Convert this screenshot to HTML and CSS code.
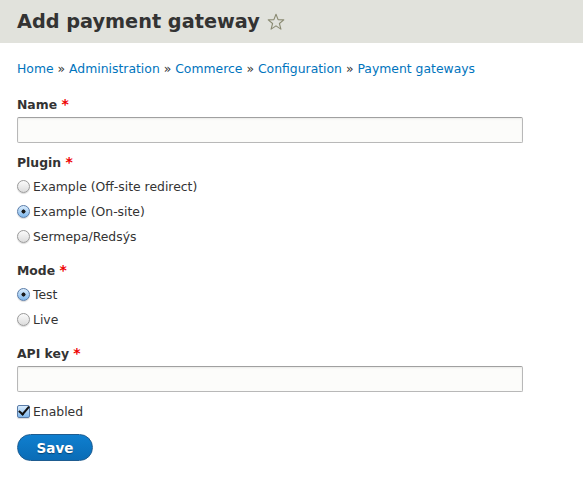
FILE: index.html
```html
<!DOCTYPE html>
<html>
<head>
<meta charset="utf-8">
<link rel="stylesheet" href="styles.css">
</head>
<body>
<header class="page-header">
  <h1 class="page-title">Add payment gateway <span class="star"><svg width="18" height="18" viewBox="0 0 18 18"><path d="M9 1.2 L11.1 6.6 L16.8 6.9 L12.4 10.5 L13.9 16.1 L9 12.9 L4.1 16.1 L5.6 10.5 L1.2 6.9 L6.9 6.6 Z" fill="none" stroke="#8a8a72" stroke-width="1.1" stroke-linejoin="round"/></svg></span></h1>
</header>
<main class="content">
  <nav class="breadcrumb"><a href="#">Home</a> » <a href="#">Administration</a> » <a href="#">Commerce</a> » <a href="#">Configuration</a> » <a href="#">Payment gateways</a></nav>
  <form class="form">
    <div class="item item-text">
      <label class="label label-text">Name <span class="req">*</span></label>
      <input class="text" type="text">
    </div>
    <div class="item item-options">
      <div class="label">Plugin <span class="req">*</span></div>
      <div class="options">
        <label class="option"><input type="radio" name="plugin"><span>Example (Off-site redirect)</span></label>
        <label class="option"><input type="radio" name="plugin" checked><span>Example (On-site)</span></label>
        <label class="option"><input type="radio" name="plugin"><span>Sermepa/Redsýs</span></label>
      </div>
    </div>
    <div class="item item-options">
      <div class="label">Mode <span class="req">*</span></div>
      <div class="options">
        <label class="option"><input type="radio" name="mode" checked><span>Test</span></label>
        <label class="option"><input type="radio" name="mode"><span>Live</span></label>
      </div>
    </div>
    <div class="item item-text">
      <label class="label label-text">API key <span class="req">*</span></label>
      <input class="text" type="text">
    </div>
    <div class="item item-check">
      <label class="option"><input type="checkbox" checked><span>Enabled</span></label>
    </div>
    <div class="actions">
      <button type="button" class="btn">Save</button>
    </div>
  </form>
</main>
</body>
</html>
```

FILE: styles.css
```css
html, body {
  margin: 0;
  padding: 0;
  background: #fff;
}
body {
  font-family: "DejaVu Sans", Verdana, sans-serif;
  font-size: 12.4px;
  color: #333;
}
.page-header {
  background: #e1e2dc;
  height: 43px;
  padding: 0 17px;
  display: flex;
  align-items: center;
}
.page-title {
  margin: 0;
  font-size: 19.3px;
  font-weight: bold;
  color: #333;
  display: flex;
  align-items: center;
  gap: 7px;
}
.star {
  display: inline-flex;
  margin-top: 1px;
}
.content {
  padding: 0 17px;
}
.breadcrumb {
  margin-top: 18px;
  line-height: 16px;
  color: #333;
}
.breadcrumb a {
  color: #0074bd;
  text-decoration: none;
}
.form {
  margin-top: 19px;
}
.item-text {
  margin-bottom: 11px;
}
.item-options {
  margin-bottom: 13px;
}
.item-check {
  margin-top: -4px;
  margin-bottom: 10px;
}
.label {
  display: block;
  font-weight: bold;
  line-height: 16px;
  height: 15px;
  padding-top: 1px;
  margin-bottom: 4px;
}
.label-text {
  margin-bottom: 5px;
}
.req {
  color: #e00;
  font-size: 14px;
  line-height: 0;
}
.text {
  display: block;
  box-sizing: border-box;
  width: 506px;
  height: 26px;
  margin: 0;
  border: 1px solid #b8b8b8;
  border-top-color: #a0a0a0;
  border-radius: 2px;
  background: #fcfcfa;
  box-shadow: inset 0 1px 2px rgba(0,0,0,0.08);
}
.options {
  display: flex;
  flex-direction: column;
}
.option {
  display: flex;
  align-items: center;
  height: 25px;
  gap: 3px;
  line-height: 16px;
}
.option input {
  appearance: none;
  -webkit-appearance: none;
  margin: 0;
  width: 13px;
  height: 13px;
  flex: none;
  box-sizing: border-box;
  border: 1px solid #9a9a9a;
  background: linear-gradient(#fbfbfb, #dcdcdc);
  box-shadow: 0 1px 1px rgba(0,0,0,0.15);
  position: relative;
}
.option input[type=radio] {
  border-radius: 50%;
}
.option input[type=radio]:checked {
  border-color: #5a7ca8;
  background: radial-gradient(circle, #1a1a1a 0 1.8px, transparent 2.3px), linear-gradient(#d9ecfd, #7fb7ec);
}
.option input[type=checkbox] {
  border-radius: 2px;
}
.option input[type=checkbox]:checked {
  border-color: #5a7ca8;
  background: linear-gradient(#d9ecfd, #7fb7ec);
}
.option input[type=checkbox]:checked::after {
  content: "";
  position: absolute;
  left: 3px;
  top: -2px;
  width: 4px;
  height: 9px;
  border: solid #111;
  border-width: 0 2px 2px 0;
  transform: rotate(40deg);
}
.actions {
  margin: 0;
}
.btn {
  display: block;
  width: 76px;
  height: 27px;
  border: 1px solid #1e5c90;
  border-radius: 14px;
  background: linear-gradient(#0f7fcf, #0a6cb6);
  color: #fff;
  font-family: "DejaVu Sans", Verdana, sans-serif;
  font-size: 13.5px;
  font-weight: bold;
  text-shadow: 0 1px 1px rgba(0,0,0,0.4);
  padding: 0;
}
```
